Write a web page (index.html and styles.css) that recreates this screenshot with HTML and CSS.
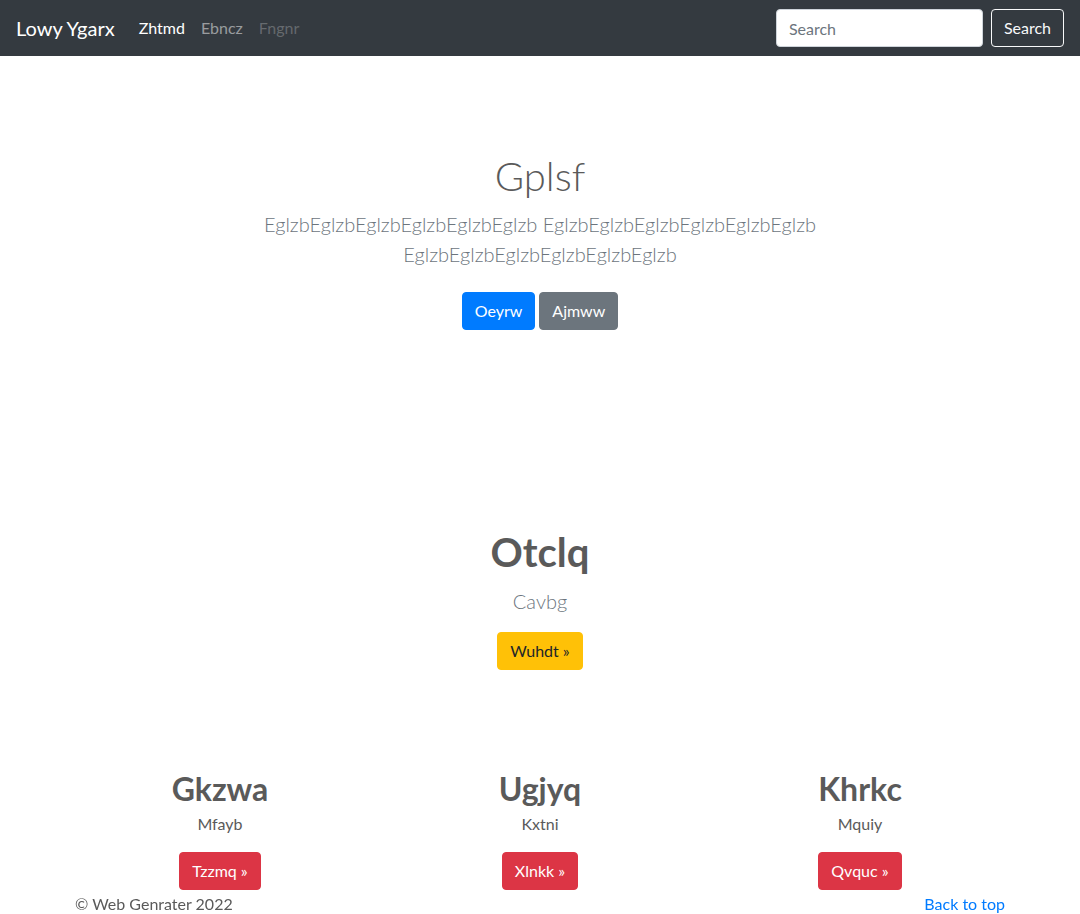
FILE: index.html
```html
<!DOCTYPE html>
<html lang="en">
<head>
<meta charset="utf-8">
<title>Lowy Ygarx</title>
<link rel="stylesheet" href="styles.css">
</head>
<body>
<header class="navbar">
  <a class="brand" href="#">Lowy Ygarx</a>
  <nav class="nav-links">
    <a class="nav-link active" href="#">Zhtmd</a>
    <a class="nav-link" href="#">Ebncz</a>
    <a class="nav-link disabled" href="#">Fngnr</a>
  </nav>
  <form class="search-form">
    <input class="search-input" type="text" placeholder="Search">
    <button class="btn btn-outline-light" type="button">Search</button>
  </form>
</header>

<main>
  <section class="hero">
    <h1 class="hero-title">Gplsf</h1>
    <p class="lead muted hero-lead">EglzbEglzbEglzbEglzbEglzbEglzb EglzbEglzbEglzbEglzbEglzbEglzb EglzbEglzbEglzbEglzbEglzbEglzb</p>
    <p class="actions">
      <a class="btn btn-primary" href="#">Oeyrw</a>
      <a class="btn btn-secondary" href="#">Ajmww</a>
    </p>
  </section>

  <section class="feature">
    <h1 class="feature-title">Otclq</h1>
    <p class="lead muted feature-lead">Cavbg</p>
    <p class="btn-line"><a class="btn btn-warning" href="#">Wuhdt &raquo;</a></p>
  </section>

  <section class="container columns">
    <div class="col">
      <h2 class="col-title">Gkzwa</h2>
      <p class="col-text">Mfayb</p>
      <p class="btn-line"><a class="btn btn-danger" href="#">Tzzmq &raquo;</a></p>
    </div>
    <div class="col">
      <h2 class="col-title">Ugjyq</h2>
      <p class="col-text">Kxtni</p>
      <p class="btn-line"><a class="btn btn-danger" href="#">Xlnkk &raquo;</a></p>
    </div>
    <div class="col">
      <h2 class="col-title">Khrkc</h2>
      <p class="col-text">Mquiy</p>
      <p class="btn-line"><a class="btn btn-danger" href="#">Qvquc &raquo;</a></p>
    </div>
  </section>
</main>

<footer class="footer">
  <div class="footer-inner">
    <p class="footer-copy">&copy; Web Genrater 2022</p>
    <p class="footer-top"><a href="#">Back to top</a></p>
  </div>
</footer>
</body>
</html>
```

FILE: styles.css
```css
* { box-sizing: border-box; }

html, body {
  margin: 0;
  padding: 0;
}

body {
  font-family: Lato, "Open Sans", "Liberation Sans", sans-serif;
  font-size: 16px;
  line-height: 1.5;
  color: #5a5a5a;
  background: #fff;
}

a { text-decoration: none; }

/* Navbar */
.navbar {
  display: flex;
  align-items: center;
  height: 56px;
  padding: 8px 16px;
  background: #343a40;
}

.brand {
  font-size: 20px;
  line-height: 30px;
  color: #fff;
  margin-right: 16px;
  padding: 5px 0;
}

.nav-links {
  display: flex;
  flex: 1;
}

.nav-link {
  padding: 8px;
  color: rgba(255, 255, 255, 0.5);
  line-height: 24px;
}

.nav-link.active { color: #fff; }
.nav-link.disabled { color: rgba(255, 255, 255, 0.25); }

.search-form {
  display: flex;
  align-items: center;
}

.search-input {
  width: 207px;
  height: 38px;
  margin-right: 8px;
  padding: 6px 12px;
  font-family: inherit;
  font-size: 16px;
  line-height: 24px;
  color: #495057;
  background: #fff;
  border: 1px solid #ced4da;
  border-radius: 4px;
  outline: none;
}

.search-input::placeholder { color: #6c757d; }

/* Buttons */
.btn {
  display: inline-block;
  font-family: inherit;
  font-size: 16px;
  line-height: 24px;
  padding: 6px 12px;
  border: 1px solid transparent;
  border-radius: 4px;
  white-space: nowrap;
  cursor: pointer;
}

.btn-outline-light {
  color: #f8f9fa;
  background: transparent;
  border-color: #f8f9fa;
}

.btn-primary { color: #fff; background: #007bff; border-color: #007bff; }
.btn-secondary { color: #fff; background: #6c757d; border-color: #6c757d; }
.btn-warning { color: #212529; background: #ffc107; border-color: #ffc107; }
.btn-danger { color: #fff; background: #dc3545; border-color: #dc3545; }

/* Shared text */
.lead {
  font-size: 20px;
  font-weight: 300;
  line-height: 30px;
}

.muted { color: #6c757d; }

/* Hero */
.hero {
  text-align: center;
  padding-top: 96px;
}

.hero-title {
  margin: 0 0 9px;
  font-size: 40px;
  font-weight: 300;
  line-height: 48px;
  color: #5a5a5a;
}

.hero-lead {
  max-width: 640px;
  margin: 0 auto 15px;
}

.actions {
  display: flex;
  justify-content: center;
  gap: 4px;
  margin: 0;
  padding-top: 8px;
}

/* Feature */
.feature {
  text-align: center;
  margin-top: 198px;
}

.feature-title {
  margin: 0 0 10px;
  font-size: 40px;
  font-weight: 700;
  line-height: 48px;
  color: #5a5a5a;
}

.feature-lead {
  margin: 0 0 16px;
}

.btn-line {
  margin: 0;
  display: flex;
  justify-content: center;
}

/* Columns */
.container {
  width: 960px;
  margin: 0 auto;
  padding: 0 15px;
}

.columns {
  display: grid;
  grid-template-columns: repeat(3, 1fr);
  gap: 30px;
  margin-top: 100px;
  text-align: center;
}

.col-title {
  margin: 0 0 4px;
  font-size: 32px;
  font-weight: 700;
  line-height: 38px;
  color: #5a5a5a;
}

.col-text {
  margin: 0 0 16px;
}

/* Footer */
.footer {
  position: fixed;
  left: 0;
  right: 0;
  bottom: 0;
}

.footer-inner {
  width: 960px;
  margin: 0 auto;
  padding: 0 15px;
  display: flex;
  justify-content: space-between;
}

.footer-inner p {
  margin: 0;
  line-height: 20px;
}

.footer-top a { color: #007bff; }
```
